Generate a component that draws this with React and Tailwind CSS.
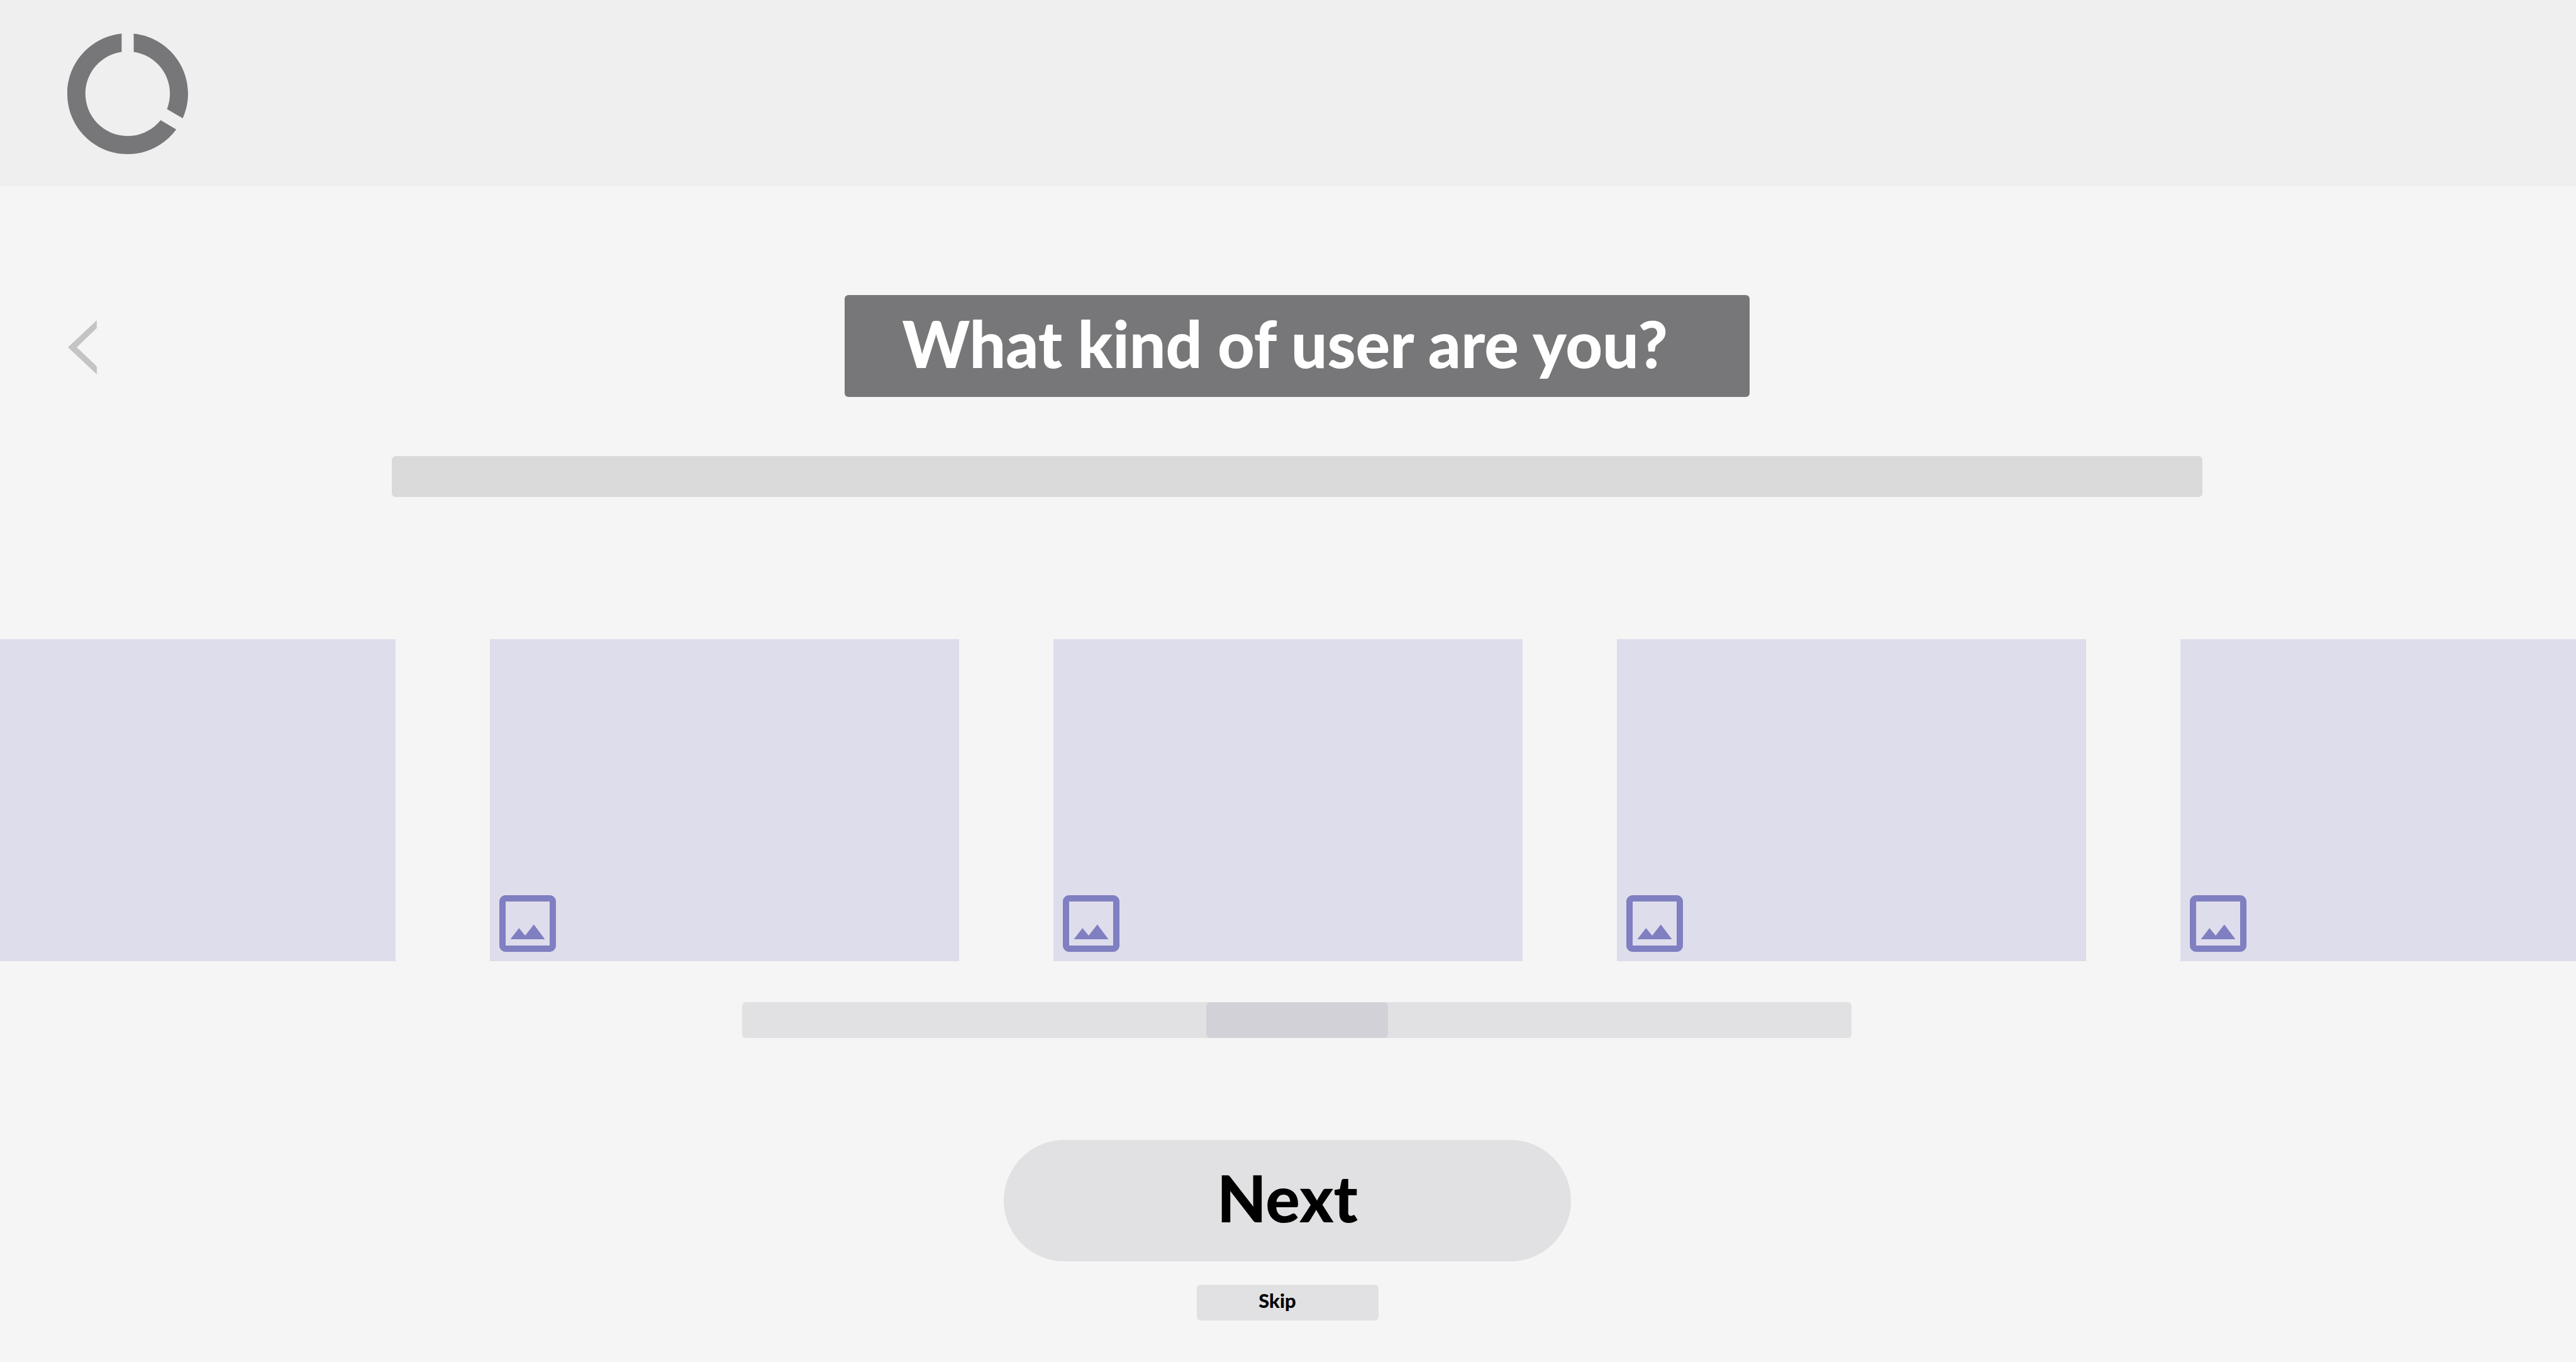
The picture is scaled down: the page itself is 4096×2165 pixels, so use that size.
function Logo() {
  return (
    <svg viewBox="2 2 20 20" className="size-48" fill="#777779" role="img" aria-label="Logo">
      <path d="M13 2.05v3.03c3.39.49 6 3.39 6 6.92 0 .9-.18 1.75-.48 2.54l2.6 1.53c.56-1.24.88-2.62.88-4.07 0-5.18-3.95-9.45-9-9.95zM12 19c-3.87 0-7-3.13-7-7 0-3.53 2.61-6.43 6-6.92V2.05c-5.06.5-9 4.76-9 9.95 0 5.52 4.47 10 9.99 10 3.31 0 6.24-1.61 8.06-4.09l-2.6-1.53C16.17 17.98 14.21 19 12 19z" />
    </svg>
  );
}

function BackIcon() {
  return (
    <svg viewBox="0 0 64 120" className="h-[86px] w-[46px]" fill="#c4c4c4" aria-hidden="true">
      <path d="M64 0 0 60l64 60v-17.5L19.5 60 64 17.5z" />
    </svg>
  );
}

function ImageIcon() {
  return (
    <svg viewBox="3 3 18 18" className="size-[90px]" fill="#7f7fc1" aria-hidden="true">
      <path d="M19 5v14H5V5h14m0-2H5c-1.1 0-2 .9-2 2v14c0 1.1.9 2 2 2h14c1.1 0 2-.9 2-2V5c0-1.1-.9-2-2-2zm-5.04 9.29l-2.75 3.54-1.96-2.36L6.5 17h11l-3.54-4.71z" />
    </svg>
  );
}

const cards = ["Option 1", "Option 2", "Option 3", "Option 4", "Option 5"];

export default function App() {
  return (
    <div className="flex min-h-screen flex-col bg-[#f5f5f5] font-['Lato',sans-serif] font-black text-black">
      <header className="bg-[#efefef] pt-[53px] pb-[51px] pl-[107px]">
        <Logo />
      </header>

      <main className="flex flex-col">
        <div className="mt-[173px] grid grid-cols-[1fr_auto_1fr] items-center">
          <button type="button" aria-label="Back" className="ml-[108px] justify-self-start pt-1">
            <BackIcon />
          </button>
          <h1 className="ml-7 w-[1439px] rounded-md bg-[#777779] pb-2 pl-[92px] text-[102px] leading-[154px] whitespace-nowrap text-white">
            What kind of user are you?
          </h1>
        </div>

        <div className="mt-[94px] ml-7 flex justify-center">
          <div className="h-[65px] w-[2879px] rounded-md bg-[#dadada]" />
        </div>

        <ul className="mt-[226px] flex justify-center gap-[150px] overflow-hidden">
          {cards.map((name) => (
            <li key={name} className="shrink-0">
              <button
                type="button"
                aria-label={name}
                className="flex h-[512px] w-[746px] items-end bg-[#deddeb] p-[15px]"
              >
                <ImageIcon />
              </button>
            </li>
          ))}
        </ul>

        <div className="mt-[65px] ml-7 flex justify-center">
          <div className="flex w-[1764px] justify-center rounded-md bg-[#e1e1e3]">
            <div className="h-[57px] w-[289px] rounded-md bg-[#d2d1d7]" />
          </div>
        </div>

        <div className="mt-[162px] flex flex-col items-center gap-[37px] pr-0.5">
          <button
            type="button"
            className="w-[902px] rounded-full bg-[#e1e1e3] pb-2.5 text-[102px] leading-[183px]"
          >
            Next
          </button>
          <button
            type="button"
            className="w-[289px] rounded-md bg-[#e1e1e3] pr-8 pb-1.5 text-[31px] leading-[51px]"
          >
            Skip
          </button>
        </div>
      </main>
    </div>
  );
}
